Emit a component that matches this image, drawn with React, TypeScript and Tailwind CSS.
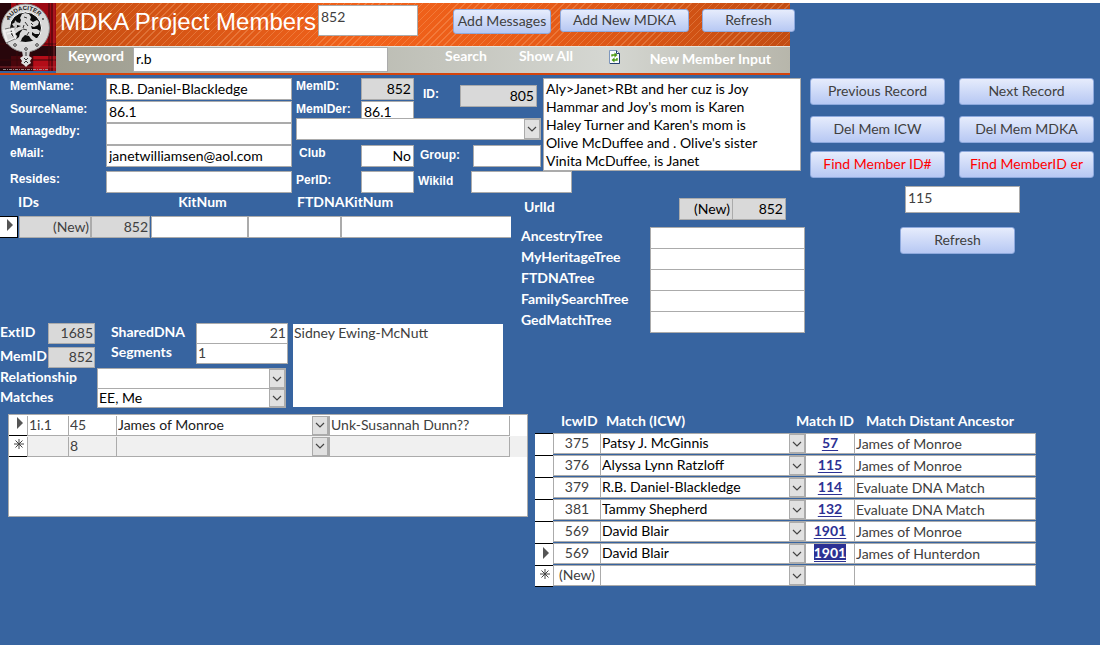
import type { ReactNode } from 'react';
import clsx from 'clsx';

const fieldBase =
  'block min-w-0 w-full border border-[#ababab] pb-[2px] text-sm leading-[18px] outline-none';
const field = clsx(fieldBase, 'h-[22px] bg-white px-[2px] text-black');
const greyField = clsx(fieldBase, 'h-[22px] bg-[#d9d9d9] px-[2px] text-right text-black');
const smallLabel =
  'font-["Liberation_Sans",sans-serif] text-xs leading-4 font-bold text-white';
const boldLabel = 'text-sm leading-[18px] font-bold text-white';

type ButtonProps = {
  children: ReactNode;
  className?: string;
};

function AccessButton({ children, className }: ButtonProps) {
  return (
    <button
      type="button"
      className={clsx(
        'rounded-[3px] border border-[#8ea9dd] bg-linear-to-b from-[#e6ecfc] to-[#b7c8f3] pb-[2px] text-sm leading-5 whitespace-nowrap',
        className,
      )}
    >
      {children}
    </button>
  );
}

type ComboProps = {
  id?: string;
  label?: string;
  value?: string;
  className?: string;
};

function Combo({ id, label, value = '', className }: ComboProps) {
  return (
    <div className={clsx('relative border border-[#ababab]', className)}>
      <select
        id={id}
        aria-label={label}
        defaultValue={value}
        className="block h-full w-full appearance-none bg-transparent pr-5 pb-px pl-px text-sm leading-4 outline-none"
      >
        <option value={value}>{value}</option>
      </select>
      <span className="pointer-events-none absolute inset-y-0 right-0 flex w-4 items-center justify-center border border-[#ababab] bg-[#e1e1e1]">
        <svg width="10" height="6" viewBox="0 0 10 6" fill="none" stroke="#444" strokeWidth="1.2">
          <path d="M1 1l4 4 4-4" />
        </svg>
      </span>
    </div>
  );
}

function CurrentMark() {
  return (
    <svg width="6" height="12" viewBox="0 0 6 12" className="mr-1 mb-1 ml-auto" aria-hidden="true">
      <path d="M0 0l6 6-6 6z" fill="#555" />
    </svg>
  );
}

function NewMark() {
  return (
    <svg
      width="10"
      height="10"
      viewBox="0 0 10 10"
      stroke="#444"
      className="mr-[3px] mb-1 ml-auto"
      aria-hidden="true"
    >
      <path d="M5 0v10M0 5h10M1.5 1.5l7 7M8.5 1.5l-7 7" />
    </svg>
  );
}

function Crest() {
  return (
    <svg width="56" height="68" viewBox="0 0 56 68" className="shrink-0" aria-hidden="true">
      <defs>
        <path id="motto" d="M7.500 25a18 18 0 0 1 36 0" />
      </defs>
      <rect width="56" height="68" fill="#9c0812" />
      <path d="M0 0h11v68H0zM0 43h56v10H0z" fill="#14060a" opacity=".85" />
      <path d="M11 53h22v15H11z" fill="#4a060c" />
      <path d="M34 53h16v15H34z" fill="#b40d18" />
      <path d="M52 0v68M49 0v68M0 41h56M0 57h56M17 0v68M31 0v68" stroke="#38060b" />
      <path d="M54 0v68M0 64h56" stroke="#c33a40" strokeWidth=".6" />
      <circle cx="25.5" cy="25" r="20" fill="#0c0c0c" stroke="#d8d8d8" strokeWidth="8" />
      <circle cx="25.5" cy="25" r="24" fill="none" stroke="#8a8a8a" />
      <circle cx="25.5" cy="25" r="16" fill="none" stroke="#fff" />
      <text
        className='font-["Liberation_Sans",sans-serif] font-bold'
        fontSize="6"
        fill="#222"
      >
        <textPath href="#motto" startOffset="8">
          AUDACITER
        </textPath>
      </text>
      {/* rampant lion */}
      <path
        d="M22 11l3-1 4 1 2 3-1 3 3 2 4-2 2 2-1 3-4 2-3-1 1 3 5 0 3 2-1 3-4 0-3-2 0 3 4 3 3 0 1 3-5 1-4-3-2-3-4-1-3 3-1 3-4 1-2-2 4-3 1-4 3-4-4 2-4 3-2-2 3-4 5-2-4-1-3 2-2-3 4-2 4 1 1-3-1-2z"
        fill="#d8d8d8"
      />
      <path d="M17 34c-5-2-5-7-2-9s-1-5 1-7" fill="none" stroke="#c7c7c7" strokeWidth="2" />
      <path
        d="M24 14l3 1M25 19l3 4M23 26l4 1M29 29l-2 3M24 22l-1 3M31 20l2 2"
        stroke="#333"
        fill="none"
      />
      <path d="M14 38q11.500 5 23 0" fill="none" stroke="#ddd" strokeWidth="3" />
      {/* strap and buckle */}
      <g fill="none" stroke="#eee">
        <path d="M4 28l9-2 2 9-8 4z" strokeWidth="2.500" />
        <path d="M7 31l6-2" strokeWidth="1.500" />
      </g>
      <path d="M5 26l9-2M6 40l9-4" stroke="#555" strokeWidth=".8" />
      <path d="M22 48h8l-1 6h-6z" fill="#d0d0d0" />
      <path d="M23 53l-3 2 2 3-1 2 3 2 2 2 2-2 3-2-1-2 2-3-3-2z" fill="#dedede" />
      <path d="M24 55l2 2 2-2M24 60l2-2 2 2M26 49v4" fill="none" stroke="#333" />
      <g fill="#fff" stroke="#333">
        <circle cx="15" cy="42" r="1.300" />
        <circle cx="26" cy="46" r="1.300" />
        <circle cx="37" cy="42" r="1.300" />
        <circle cx="8" cy="16" r=".6" />
        <circle cx="43" cy="16" r=".6" />
      </g>
      <path d="M3 66.500h46" stroke="#aaa" strokeDasharray="3 1 1 1" strokeWidth=".8" />
    </svg>
  );
}

function RefreshPageIcon() {
  return (
    <svg width="11" height="14" viewBox="0 0 11 14" fill="none">
      <path d="M.5.5h7l3 3v10H.5z" fill="#f8fbff" stroke="#7f98bd" />
      <path d="M10.500 3.500v10H1" stroke="#25406f" />
      <path d="M7.500.5v3h3" stroke="#25406f" />
      <path d="M3 6.500V5h3M8 8v2H5" stroke="#4c9a12" strokeWidth="1.400" />
      <path d="M5.500 2.500L8.500 5l-3 2.500zM5.500 7.500l-3 2.500 3 2.500z" fill="#4c9a12" />
    </svg>
  );
}

function Header() {
  return (
    <header className="w-full max-w-[790px] border-b-2 border-[#d4440c]">
      <div className="flex h-[70px]">
        <Crest />
        <div className="flex min-w-0 flex-1 flex-col">
          <div className="flex h-[43px] items-start bg-[repeating-linear-gradient(135deg,transparent_0_4px,rgba(255,190,140,0.28)_4px_5px),linear-gradient(90deg,#c54d12,#f2621b_42%,#e85c18_65%,#c24c12)] pt-[2px]">
            <h1 className='shrink-0 pl-1 font-["Liberation_Sans",sans-serif] text-2xl leading-[34px] whitespace-nowrap text-white'>
              MDKA Project Members
            </h1>
            <input
              aria-label="Member number"
              defaultValue="852"
              className="ml-auto h-[31px] w-[100px] border border-[#ababab] bg-white px-[2px] pb-2 text-sm text-[#404040] outline-none"
            />
            <div className="-mr-[5px] ml-[35px] flex shrink-0 items-start pt-1">
              <AccessButton className="h-[25px] w-[98px] text-[#404040]">Add Messages</AccessButton>
              <AccessButton className="ml-[9px] h-[23px] w-[129px] text-[#404040]">
                Add New MDKA
              </AccessButton>
              <AccessButton className="ml-[13px] h-[23px] w-[93px] text-[#404040]">
                Refresh
              </AccessButton>
            </div>
          </div>
          <div className="flex h-[27px] items-start border-t border-[#e6e2da] bg-linear-to-r from-[#9c9b8d] via-[#d5d7d2] via-75% to-[#b7b6ab]">
            <label htmlFor="keyword" className={clsx(boldLabel, 'w-[77px] pl-3')}>
              Keyword
            </label>
            <input
              id="keyword"
              defaultValue="r.b"
              className="h-[25px] w-[255px] border border-[#ababab] bg-white px-[2px] pb-[2px] text-sm text-black outline-none"
            />
            <button type="button" className={clsx(boldLabel, 'ml-[57px]')}>
              Search
            </button>
            <button type="button" className={clsx(boldLabel, 'ml-8')}>
              Show All
            </button>
            <button type="button" aria-label="Reload" className="ml-auto pt-[3px]">
              <RefreshPageIcon />
            </button>
            <button type="button" className={clsx(boldLabel, 'mr-[19px] ml-[30px] pt-[3px]')}>
              New Member Input
            </button>
          </div>
        </div>
      </div>
    </header>
  );
}

const memberFields = [
  { id: 'memName', label: 'MemName:', value: 'R.B. Daniel-Blackledge' },
  { id: 'sourceName', label: 'SourceName:', value: '86.1' },
  { id: 'managedBy', label: 'Managedby:', value: '' },
  { id: 'email', label: 'eMail:', value: 'janetwilliamsen@aol.com' },
  { id: 'resides', label: 'Resides:', value: '' },
];

const note = `Aly>Janet>RBt and her cuz is Joy
Hammar and Joy's mom is Karen
Haley Turner and Karen's mom is
Olive McDuffee and . Olive's sister
Vinita McDuffee, is Janet`;

function MemberForm() {
  return (
    <section className="col-span-2 flex gap-1 pt-[3px] pl-[10px]">
      <div className="grid w-[282px] grid-cols-[96px_1fr] grid-rows-[23px_22px_22px_26px_22px]">
        {memberFields.map((f) => (
          <div key={f.id} className="col-span-2 grid grid-cols-subgrid">
            <label htmlFor={f.id} className={smallLabel}>
              {f.label}
            </label>
            <input id={f.id} defaultValue={f.value} className={field} />
          </div>
        ))}
      </div>

      <div className="flex-1">
        <div className="flex gap-[2px]">
          <div className="flex w-[245px] flex-col">
            <div className="flex">
              <div className="grid grid-cols-[65px_53px] gap-y-px">
                <label htmlFor="memId" className={smallLabel}>
                  MemID:
                </label>
                <input id="memId" defaultValue="852" className={greyField} />
                <label htmlFor="memIdEr" className={smallLabel}>
                  MemIDer:
                </label>
                <div className="h-[17px] overflow-hidden">
                  <input id="memIdEr" defaultValue="86.1" className={field} />
                </div>
              </div>
              <label htmlFor="id" className={clsx(smallLabel, 'w-[46px] shrink-0 pt-2 pl-[9px]')}>
                ID:
              </label>
              <div className="flex-1 pt-[7px] pr-1">
                <input id="id" defaultValue="805" className={greyField} />
              </div>
            </div>
            <Combo label="Member lookup" className="h-[22px] bg-white" />
            <div className="mt-[5px] grid grid-cols-[65px_53px_59px_1fr]">
              <label htmlFor="club" className={clsx(smallLabel, 'pl-[3px]')}>
                Club
              </label>
              <input id="club" defaultValue="No" className={clsx(field, 'text-right')} />
              <label htmlFor="group" className={clsx(smallLabel, 'pt-[2px] pl-[6px]')}>
                Group:
              </label>
              <input id="group" className={field} />
            </div>
          </div>
          <textarea
            aria-label="Notes"
            defaultValue={note}
            className="h-[93px] w-[258px] resize-none overflow-hidden border border-[#ababab] bg-white px-[2px] pt-px text-sm leading-[18px] text-black outline-none"
          />
        </div>
        <div className="grid w-[276px] grid-cols-[65px_53px_57px_1fr]">
          <label htmlFor="perId" className={clsx(smallLabel, 'pt-px')}>
            PerID:
          </label>
          <input id="perId" className={field} />
          <label htmlFor="wikiId" className={clsx(smallLabel, 'pt-[2px] pl-1')}>
            Wikild
          </label>
          <input id="wikiId" className={field} />
        </div>
      </div>
    </section>
  );
}

function RecordButtons() {
  const button = 'h-[27px] w-full';
  return (
    <section className="row-span-2 pt-[3px] pr-[6px] pl-[5px]">
      <div className="grid grid-cols-2 grid-rows-[38px_35px_27px] gap-x-[14px] text-[#404040]">
        <AccessButton className={button}>Previous Record</AccessButton>
        <AccessButton className={button}>Next Record</AccessButton>
        <AccessButton className={button}>Del Mem ICW</AccessButton>
        <AccessButton className={button}>Del Mem MDKA</AccessButton>
        <AccessButton className={clsx(button, 'text-[#ff0000]')}>Find Member ID#</AccessButton>
        <AccessButton className={clsx(button, 'text-[#ff0000]')}>Find MemberID er</AccessButton>
      </div>
      <div className="flex flex-col items-start gap-[14px] pt-2 pl-[90px]">
        <input
          aria-label="Find member"
          defaultValue="115"
          className="ml-[5px] h-[27px] w-[115px] border border-[#ababab] bg-white px-[2px] pb-1 text-sm text-[#404040] outline-none"
        />
        <AccessButton className="h-[27px] w-[115px] text-[#404040]">Refresh</AccessButton>
      </div>
    </section>
  );
}

function KitTable() {
  const grey = clsx(
    fieldBase,
    'h-[22px] bg-[#d9d9d9] px-px text-right text-[#404040]',
  );
  return (
    <table className="w-[511px] table-fixed border-separate border-spacing-0">
      <colgroup>
        <col className="w-[18px]" />
        <col className="w-[73px]" />
        <col className="w-[60px]" />
        <col className="w-[97px]" />
        <col className="w-[93px]" />
        <col />
      </colgroup>
      <thead>
        <tr className={clsx(boldLabel, 'h-[23px] align-top')}>
          <th className="p-0" />
          <th className="p-0 text-left" colSpan={2}>
            IDs
          </th>
          <th className="p-0 pl-[6px]">KitNum</th>
          <th className="p-0 pl-[49px] text-left" colSpan={2}>
            FTDNAKitNum
          </th>
        </tr>
      </thead>
      <tbody>
        <tr>
          <td className="border border-l-0 border-black bg-white p-0">
            <CurrentMark />
          </td>
          <td className="p-0 pl-px">
            <input aria-label="Kit record" defaultValue="(New)" className={grey} />
          </td>
          <td className="p-0 pr-px">
            <input aria-label="Kit member" defaultValue="852" className={grey} />
          </td>
          <td className="p-0">
            <input aria-label="KitNum" className={field} />
          </td>
          <td className="p-0">
            <input aria-label="FTDNAKitNum" className={field} />
          </td>
          <td className="p-0">
            <input aria-label="Kit notes" className={clsx(field, 'border-r-0')} />
          </td>
        </tr>
      </tbody>
    </table>
  );
}

function RelationForm() {
  const input = clsx(fieldBase, 'h-[21px] bg-white px-px text-[#404040]');
  const grey = clsx(fieldBase, 'h-[21px] bg-[#d9d9d9] px-px text-right text-[#404040]');
  return (
    <div className="mt-[85px] flex">
      <div className="w-[293px]">
        <div className="flex">
          <div className="grid w-[95px] grid-cols-[48px_1fr] gap-y-[3px]">
            <label htmlFor="extId" className={boldLabel}>
              ExtID
            </label>
            <input id="extId" defaultValue="1685" className={grey} />
            <label htmlFor="extMemId" className={boldLabel}>
              MemID
            </label>
            <input id="extMemId" defaultValue="852" className={grey} />
          </div>
          <div className="ml-4 grid w-[177px] grid-cols-[85px_1fr] content-start">
            <label htmlFor="sharedDna" className={boldLabel}>
              SharedDNA
            </label>
            <input
              id="sharedDna"
              defaultValue="21"
              className={clsx(input, '-mb-px text-right')}
            />
            <label htmlFor="segments" className={boldLabel}>
              Segments
            </label>
            <input id="segments" defaultValue="1" className={input} />
          </div>
        </div>
        <div className="grid w-[286px] grid-cols-[97px_1fr]">
          <label htmlFor="relationship" className={boldLabel}>
            Relationship
          </label>
          <Combo id="relationship" className="-mb-px h-[21px] bg-white" />
          <label htmlFor="matches" className={boldLabel}>
            Matches
          </label>
          <Combo id="matches" value="EE, Me" className="h-5 bg-white" />
        </div>
      </div>
      <textarea
        aria-label="Relation notes"
        defaultValue="Sidney Ewing-McNutt"
        className="mt-px h-[83px] w-[210px] resize-none bg-white px-px text-sm leading-[18px] text-[#404040] outline-none"
      />
    </div>
  );
}

const relationRows = [
  { code: '1i.1', count: '45', ancestor: 'James of Monroe', note: 'Unk-Susannah Dunn??' },
  { code: '', count: '8', ancestor: '', note: '' },
];

function RelationTable() {
  const cell =
    'block h-5 w-full border-b border-l border-[#ababab] bg-transparent px-px pb-px text-sm leading-[18px] text-[#404040] outline-none';
  return (
    <div className="mt-[6px] ml-2 h-[103px] w-[520px] border border-[#ababab] bg-white">
      <table className="w-full table-fixed border-separate border-spacing-0">
        <colgroup>
          <col className="w-[18px]" />
          <col className="w-[41px]" />
          <col className="w-12" />
          <col className="w-[213px]" />
          <col className="w-[181px]" />
          <col />
        </colgroup>
        <tbody>
          {relationRows.map((row, i) => (
            <tr key={row.count} className={clsx('h-[21px]', i === 1 && 'bg-[#f0f0f0]')}>
              <td className="border-b border-black bg-white p-0">
                {i === 0 ? <CurrentMark /> : <NewMark />}
              </td>
              <td className="p-0">
                <input aria-label="Code" defaultValue={row.code} className={cell} />
              </td>
              <td className="p-0">
                <input aria-label="Count" defaultValue={row.count} className={cell} />
              </td>
              <td className="p-0">
                <Combo
                  label="Ancestor"
                  value={row.ancestor}
                  className="h-5 border-t-0 text-[#202020]"
                />
              </td>
              <td className="p-0">
                <input
                  aria-label="Note"
                  defaultValue={row.note}
                  className={clsx(cell, 'border-r')}
                />
              </td>
              <td className="p-0" />
            </tr>
          ))}
        </tbody>
      </table>
    </div>
  );
}

const trees = ['AncestryTree', 'MyHeritageTree', 'FTDNATree', 'FamilySearchTree', 'GedMatchTree'];

function TreeForm() {
  return (
    <section className="pt-[5px]">
      <div className="flex">
        <label htmlFor="urlId" className={clsx(boldLabel, 'w-[158px] pl-[3px]')}>
          UrlId
        </label>
        <input id="urlId" defaultValue="(New)" className={clsx(greyField, 'max-w-[54px]')} />
        <input
          aria-label="Url member"
          defaultValue="852"
          className={clsx(greyField, '-ml-px max-w-[54px]')}
        />
      </div>
      <div className="mt-[7px] grid grid-cols-[129px_1fr] pb-px">
        {trees.map((tree) => (
          <div key={tree} className="col-span-2 grid h-[21px] grid-cols-subgrid">
            <label htmlFor={tree} className={boldLabel}>
              {tree}
            </label>
            <input id={tree} className={field} />
          </div>
        ))}
      </div>
    </section>
  );
}

const matches = [
  { icw: '375', name: 'Patsy J. McGinnis', id: '57', ancestor: 'James of Monroe' },
  { icw: '376', name: 'Alyssa Lynn Ratzloff', id: '115', ancestor: 'James of Monroe' },
  { icw: '379', name: 'R.B. Daniel-Blackledge', id: '114', ancestor: 'Evaluate DNA Match' },
  { icw: '381', name: 'Tammy Shepherd', id: '132', ancestor: 'Evaluate DNA Match' },
  { icw: '569', name: 'David Blair', id: '1901', ancestor: 'James of Monroe' },
  { icw: '569', name: 'David Blair', id: '1901', ancestor: 'James of Hunterdon', current: true },
  { icw: '(New)', name: '', id: '', ancestor: '' },
];

function MatchTable() {
  const cell =
    'block h-[21px] border-y border-l border-[#ababab] bg-white text-sm leading-[18px]';
  return (
    <section className="col-span-2 pt-[79px] pl-[14px]">
      <table className="w-[501px] table-fixed border-separate border-spacing-0 text-[#404040]">
        <colgroup>
          <col className="w-[18px]" />
          <col className="w-[47px]" />
          <col className="w-[206px]" />
          <col className="w-12" />
          <col />
        </colgroup>
        <thead>
          <tr className={clsx(boldLabel, 'h-[21px] text-left align-top whitespace-nowrap')}>
            <th className="p-0" />
            <th className="p-0 pl-2">IcwID</th>
            <th className="p-0 pl-[6px]">Match (ICW)</th>
            <th className="p-0">
              <span className="float-right">Match ID</span>
            </th>
            <th className="p-0 pl-3">Match Distant Ancestor</th>
          </tr>
        </thead>
        <tbody>
          {matches.map((m, i) => (
            <tr key={i} className="h-[22px] align-top">
              <td
                className={clsx(
                  'border-t border-black bg-white p-0 align-middle',
                  i === matches.length - 1 && 'border-b',
                )}
              >
                {m.current && <CurrentMark />}
                {m.icw === '(New)' && <NewMark />}
              </td>
              <td className="p-0">
                <span className={clsx(cell, 'text-center')}>{m.icw}</span>
              </td>
              <td className="p-0">
                <Combo label="Match" value={m.name} className="h-[21px] bg-white text-black" />
              </td>
              <td className="p-0">
                <span className={clsx(cell, 'border-l-0 text-center')}>
                  {m.id && (
                    <a
                      href={`#${m.id}`}
                      className={clsx(
                        'inline-block font-bold underline underline-offset-2',
                        m.current ? 'bg-[#2c3193] text-white' : 'text-[#2c3193]',
                      )}
                    >
                      {m.id}
                    </a>
                  )}
                </span>
              </td>
              <td className="p-0">
                <input
                  aria-label="Match distant ancestor"
                  defaultValue={m.ancestor}
                  className={clsx(cell, 'w-full border-r px-px pb-px outline-none')}
                />
              </td>
            </tr>
          ))}
        </tbody>
      </table>
    </section>
  );
}

export default function App() {
  return (
    <div className='min-h-screen border-t-[3px] border-white bg-[#3764a0] font-["Lato","Open_Sans",sans-serif]'>
      <Header />
      <main className="grid grid-cols-[521px_284px_minmax(284px,1fr)] grid-rows-[auto_auto_1fr]">
        <MemberForm />
        <RecordButtons />
        <section className="row-span-2">
          <KitTable />
          <RelationForm />
          <RelationTable />
        </section>
        <TreeForm />
        <MatchTable />
      </main>
    </div>
  );
}
